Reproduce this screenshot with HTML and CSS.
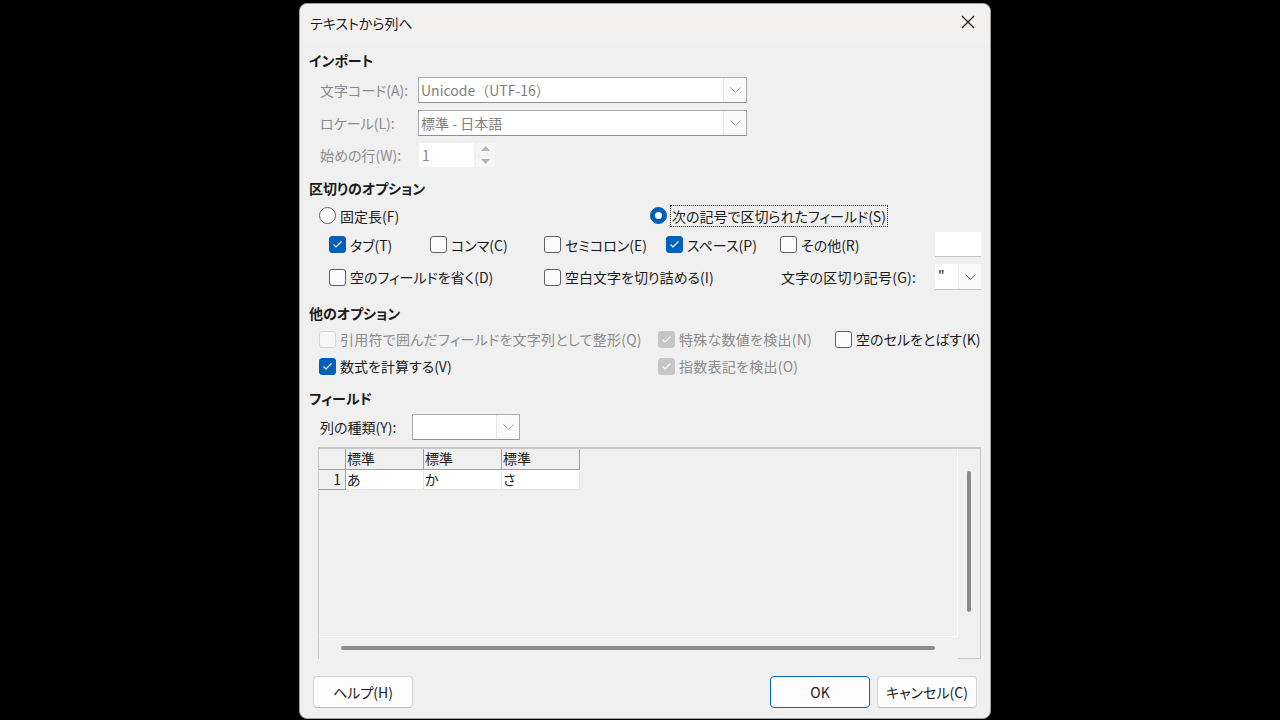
FILE: index.html
```html
<!DOCTYPE html>
<html lang="ja">
<head>
<meta charset="utf-8">
<title>テキストから列へ</title>
<link rel="stylesheet" href="styles.css">
</head>
<body>
<div class="dialog">
  <div class="titlebar">
    <span class="title">テキストから列へ</span>
    <svg class="close" width="14" height="14" viewBox="0 0 14 14"><path d="M1 1L13 13M13 1L1 13" stroke="#1b1b1b" stroke-width="1.3" fill="none"/></svg>
  </div>
  <div class="body">
    <div class="heading h1">インポート</div>

    <div class="row lrow r-a">
      <span class="lbl dis w98">文字コード(A):</span>
      <div class="combo c-wide dis"><span class="ctext nopalt">Unicode（UTF-16）</span><span class="cbtn"><svg width="11" height="6" viewBox="0 0 11 6"><path d="M0.5 0.5L5.5 5.5L10.5 0.5" stroke="#a8a8a8" fill="none"/></svg></span></div>
    </div>
    <div class="row lrow r-b">
      <span class="lbl dis w98">ロケール(L):</span>
      <div class="combo c-wide dis"><span class="ctext">標準 - 日本語</span><span class="cbtn"><svg width="11" height="6" viewBox="0 0 11 6"><path d="M0.5 0.5L5.5 5.5L10.5 0.5" stroke="#a8a8a8" fill="none"/></svg></span></div>
    </div>
    <div class="row lrow r-c">
      <span class="lbl dis w99">始めの行(W):</span>
      <div class="spin"><span class="stext">1</span></div>
      <div class="spinbtns">
        <span class="sb"><svg width="9" height="5" viewBox="0 0 9 5"><path d="M0 5L4.5 0L9 5Z" fill="#b4b4b4"/></svg></span>
        <span class="sb"><svg width="9" height="5" viewBox="0 0 9 5"><path d="M0 0L4.5 5L9 0Z" fill="#b4b4b4"/></svg></span>
      </div>
    </div>

    <div class="heading h2">区切りのオプション</div>
    <div class="row r-radio">
      <div class="item w331"><span class="rb"></span><span class="txt">固定長(F)</span></div>
      <div class="item"><span class="rb on"><span class="dot"></span></span><span class="txt focus">次の記号で区切られたフィールド(S)</span></div>
    </div>
    <div class="row r-ck1">
      <div class="item w101"><span class="cb on"><svg width="15" height="15" viewBox="0 0 15 15"><path d="M3.5 7.5L6 10L11.5 4.5" stroke="#fff" stroke-width="1.1" fill="none"/></svg></span><span class="txt">タブ(T)</span></div>
      <div class="item w114"><span class="cb"></span><span class="txt">コンマ(C)</span></div>
      <div class="item w122"><span class="cb"></span><span class="txt">セミコロン(E)</span></div>
      <div class="item w114"><span class="cb on"><svg width="15" height="15" viewBox="0 0 15 15"><path d="M3.5 7.5L6 10L11.5 4.5" stroke="#fff" stroke-width="1.1" fill="none"/></svg></span><span class="txt">スペース(P)</span></div>
      <div class="item"><span class="cb"></span><span class="txt">その他(R)</span></div>
      <div class="otherbox"></div>
    </div>
    <div class="row r-ck2">
      <div class="item w215"><span class="cb"></span><span class="txt">空のフィールドを省く(D)</span></div>
      <div class="item w237"><span class="cb"></span><span class="txt">空白文字を切り詰める(I)</span></div>
      <span class="lbl w154 wide">文字の区切り記号(G):</span>
      <div class="combo c-quote"><span class="ctext dark">"</span><span class="cbtn"><svg width="11" height="6" viewBox="0 0 11 6"><path d="M0.5 0.5L5.5 5.5L10.5 0.5" stroke="#707070" fill="none"/></svg></span></div>
    </div>

    <div class="heading h3">他のオプション</div>
    <div class="row r-o1">
      <div class="item w339"><span class="cb dis"></span><span class="txt dis wide">引用符で囲んだフィールドを文字列として整形(Q)</span></div>
      <div class="item w177"><span class="cb dison"><svg width="15" height="15" viewBox="0 0 15 15"><path d="M3.5 7.5L6 10L11.5 4.5" stroke="#fff" stroke-width="1.1" fill="none"/></svg></span><span class="txt dis wide">特殊な数値を検出(N)</span></div>
      <div class="item"><span class="cb"></span><span class="txt">空のセルをとばす(K)</span></div>
    </div>
    <div class="row r-o2">
      <div class="item w339"><span class="cb on"><svg width="15" height="15" viewBox="0 0 15 15"><path d="M3.5 7.5L6 10L11.5 4.5" stroke="#fff" stroke-width="1.1" fill="none"/></svg></span><span class="txt">数式を計算する(V)</span></div>
      <div class="item"><span class="cb dison"><svg width="15" height="15" viewBox="0 0 15 15"><path d="M3.5 7.5L6 10L11.5 4.5" stroke="#fff" stroke-width="1.1" fill="none"/></svg></span><span class="txt dis wide">指数表記を検出(O)</span></div>
    </div>

    <div class="heading h4">フィールド</div>
    <div class="row lrow r-type">
      <span class="lbl w92">列の種類(Y):</span>
      <div class="combo c-type"><span class="ctext"></span><span class="cbtn"><svg width="11" height="6" viewBox="0 0 11 6"><path d="M0.5 0.5L5.5 5.5L10.5 0.5" stroke="#a8a8a8" fill="none"/></svg></span></div>
    </div>

    <div class="preview">
      <div class="pmain">
        <div class="grid">
          <div class="grow ghead">
            <span class="gc rh"></span>
            <span class="gc hc">標準</span>
            <span class="gc hc">標準</span>
            <span class="gc hc">標準</span>
          </div>
          <div class="grow gdata">
            <span class="gc rh num">1</span>
            <span class="gc dc">あ</span>
            <span class="gc dc">か</span>
            <span class="gc dc">さ</span>
          </div>
        </div>
        <div class="vscroll"><span class="vthumb"></span></div>
      </div>
      <div class="pbottom">
        <div class="hscroll"><span class="hthumb"></span></div>
        <div class="corner"></div>
      </div>
    </div>

    <div class="buttons">
      <button class="btn">ヘルプ(H)</button>
      <button class="btn primary">OK</button>
      <button class="btn">キャンセル(C)</button>
    </div>
  </div>
</div>
</body>
</html>
```
FILE: styles.css
```css
html, body {
  margin: 0;
  padding: 0;
}
body {
  background: #000;
  width: 1280px;
  height: 720px;
  overflow: hidden;
  font-family: "Noto Sans CJK JP", "Noto Sans", sans-serif;
  font-size: 14px;
  font-feature-settings: "palt";
  color: #1b1b1b;
}
.nopalt { font-feature-settings: normal; }
.wide { letter-spacing: 0.25px; }
.dialog {
  margin: 3px 0 0 299px;
  width: 690px;
  height: 714px;
  border: 1px solid #a0a0a0;
  border-radius: 8px;
  background: #f0f0f0;
  overflow: hidden;
  display: flex;
  flex-direction: column;
}
.titlebar {
  height: 39px;
  flex: none;
  background: #f3f0f0;
  display: flex;
  align-items: center;
  padding-left: 10px;
}
.title {
  font-size: 14px;
  line-height: 20px;
  margin-top: -2px;
}
.close {
  margin-left: auto;
  margin-right: 15px;
  margin-top: -3px;
}
.body {
  display: flex;
  flex-direction: column;
  padding-top: 7px;
}
.heading {
  font-weight: bold;
  line-height: 20px;
  height: 20px;
  padding-left: 9px;
}
.row {
  display: flex;
  align-items: center;
}
.lrow { padding-left: 20px; }
.lbl { line-height: 20px; white-space: nowrap; flex: none; }
.dis { color: #8b8b8b; }
.w92 { width: 92px; }
.w98 { width: 98px; }
.w99 { width: 99px; }
.w101 { width: 101px; }
.w114 { width: 114px; }
.w122 { width: 122px; }
.w154 { width: 154px; }
.w177 { width: 177px; }
.w215 { width: 215px; }
.w237 { width: 237px; }
.w331 { width: 331px; }
.w339 { width: 339px; }

.r-a { margin-top: 7px; height: 26px; }
.r-b { margin-top: 7px; height: 26px; }
.r-c { margin-top: 7px; height: 24px; }
.h2 { margin-top: 11px; }
.r-radio { margin-top: 7px; height: 21px; padding-left: 19px; }
.r-ck1 { margin-top: 6px; height: 25px; padding-left: 29px; }
.r-ck2 { margin-top: 7px; height: 26px; padding-left: 29px; }
.h3 { margin-top: 13px; }
.r-o1 { margin-top: 6px; height: 20px; padding-left: 19px; }
.r-o2 { margin-top: 7px; height: 20px; padding-left: 19px; }
.h4 { margin-top: 12px; }
.r-type { margin-top: 6px; height: 26px; }

.combo {
  box-sizing: border-box;
  height: 26px;
  background: #fff;
  border: 1px solid #ababab;
  border-bottom-color: #8f8f8f;
  display: flex;
  align-items: stretch;
  flex: none;
}
.c-wide { width: 329px; }
.c-type { width: 108px; }
.c-quote { width: 46px; margin-left: 0; border: none; border-bottom: 1px solid #c0c0c0; }
.ctext {
  flex: 1;
  line-height: 24px;
  padding-left: 2px;
  color: #7f7f7f;
  white-space: nowrap;
  overflow: hidden;
}
.ctext.dark { color: #1b1b1b; padding-left: 3px; }
.cbtn {
  width: 22px;
  flex: none;
  background: #fafafa;
  border-left: 1px solid #e6e6e6;
  display: flex;
  align-items: center;
  justify-content: center;
}
.spin {
  width: 55px;
  height: 24px;
  background: #fff;
  box-sizing: border-box;
  flex: none;
}
.stext {
  line-height: 24px;
  padding-left: 3px;
  color: #8b8b8b;
}
.spinbtns {
  margin-left: 2px;
  width: 19px;
  height: 24px;
  display: flex;
  flex-direction: column;
  gap: 1px;
}
.sb {
  flex: 1;
  background: #f6f6f6;
  display: flex;
  align-items: center;
  justify-content: center;
}

.item {
  display: flex;
  align-items: center;
  flex: none;
}
.txt {
  line-height: 20px;
  white-space: nowrap;
  margin-left: 4px;
}
.cb {
  box-sizing: border-box;
  width: 17px;
  height: 17px;
  border: 1px solid #5e5e5e;
  border-radius: 3px;
  background: #fbfbfb;
  flex: none;
  display: flex;
  align-items: center;
  justify-content: center;
}
.cb.on { background: #005fb8; border-color: #005fb8; }
.cb.dis { border-color: #d6d6d6; background: #f6f6f6; }
.cb.dison { background: #c6c6c6; border-color: #c6c6c6; }
.rb {
  box-sizing: border-box;
  width: 17px;
  height: 17px;
  border: 1px solid #5e5e5e;
  border-radius: 50%;
  background: #fbfbfb;
  flex: none;
  display: flex;
  align-items: center;
  justify-content: center;
}
.rb.on { background: #005fb8; border-color: #005fb8; }
.rb .dot {
  width: 7px;
  height: 7px;
  border-radius: 50%;
  background: #fff;
}
.focus {
  outline: 1px dotted #333;
  outline-offset: 0;
  padding: 0 1px;
}
.otherbox {
  margin-left: auto;
  margin-right: 9px;
  width: 46px;
  height: 25px;
  background: #fff;
  box-sizing: border-box;
  border-bottom: 1px solid #c0c0c0;
}
.r-ck2 .combo { margin-right: 9px; margin-left: auto; }

.preview {
  margin-top: 7px;
  margin-left: 18px;
  width: 663px;
  height: 212px;
  box-sizing: border-box;
  border: 1px solid #c9c9c9;
  border-bottom: none;
  border-top-width: 2px;
  display: flex;
  flex-direction: column;
}
.pmain {
  flex: 1;
  display: flex;
}
.grid {
  flex: 1;
  border-right: 1px solid #fff;
  border-bottom: 1px solid #fff;
}
.vscroll {
  width: 22px;
  flex: none;
  position: relative;
}
.vthumb {
  position: absolute;
  left: 9px;
  top: 22px;
  width: 4px;
  height: 141px;
  border-radius: 2px;
  background: #8a8a8a;
}
.pbottom {
  height: 22px;
  display: flex;
}
.hscroll {
  flex: 1;
  position: relative;
}
.hthumb {
  position: absolute;
  left: 22px;
  top: 9px;
  width: 594px;
  height: 4px;
  border-radius: 2px;
  background: #8a8a8a;
}
.corner {
  width: 22px;
  border-bottom: 1px solid #c9c9c9;
  box-sizing: border-box;
}
.grow {
  display: flex;
}
.ghead { height: 21px; }
.gdata { height: 20px; }
.gc {
  box-sizing: border-box;
  line-height: 19px;
  white-space: nowrap;
  flex: none;
}
.rh {
  width: 27px;
  background: #f0f0f0;
  border-right: 1px solid #a0a0a0;
  border-bottom: 1px solid #a0a0a0;
}
.rh.num {
  text-align: right;
  padding-right: 4px;
}
.hc {
  width: 78px;
  background: #f0f0f0;
  border-right: 1px solid #a0a0a0;
  border-bottom: 1px solid #a0a0a0;
  padding-left: 1px;
}
.dc {
  width: 78px;
  background: #fff;
  border-right: 1px solid #e4e4e4;
  border-bottom: 1px solid #e4e4e4;
  padding-left: 1px;
}

.buttons {
  margin-top: 17px;
  display: flex;
  padding-left: 13px;
  padding-right: 13px;
}
.btn {
  font-family: inherit;
  font-size: 14px;
  font-feature-settings: "palt";
  color: #1b1b1b;
  width: 100px;
  height: 32px;
  box-sizing: border-box;
  background: #fdfdfd;
  border: 1px solid #d4d4d4;
  border-bottom-color: #bdbdbd;
  border-radius: 4px;
  padding: 0;
  line-height: 20px;
}
.btn.primary {
  margin-left: auto;
  margin-right: 7px;
  border: 1px solid #0067c0;
}
```
